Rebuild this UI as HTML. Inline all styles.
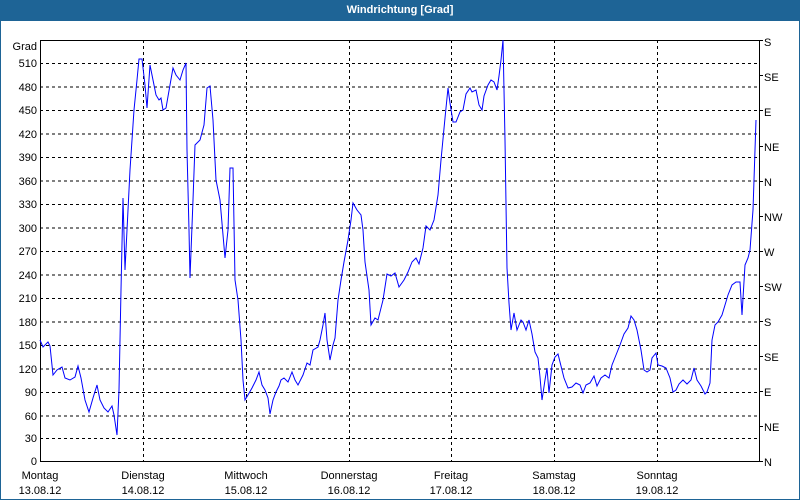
<!DOCTYPE html>
<html><head><meta charset="utf-8"><style>
html,body{margin:0;padding:0;background:#fff}
body{width:800px;height:500px;position:relative;overflow:hidden;font-family:"Liberation Sans",sans-serif}
.frame{position:absolute;left:0;top:0;width:798px;height:498px;border:1px solid #1e6496}
.title{position:absolute;left:0;top:0;width:800px;height:21px;background:#1e6496;color:#fff;font-weight:bold;font-size:11px;line-height:21px;text-align:center}
svg{position:absolute;left:0;top:0}
svg text{font-family:"Liberation Sans",sans-serif;font-size:11px;fill:#000}
</style></head><body>
<div class="frame"></div>
<div class="title">Windrichtung [Grad]</div>
<svg width="800" height="500" viewBox="0 0 800 500">
<g stroke="#000" stroke-width="1" stroke-dasharray="3,3" fill="none" shape-rendering="crispEdges">
<path d="M40 63.5H760M40 87H760M40 110.5H760M40 134H760M40 157.5H760M40 181H760M40 204.5H760M40 228H760M40 251.5H760M40 275H760M40 298.5H760M40 322H760M40 345.5H760M40 369H760M40 392.5H760M40 416H760M40 438.5H760"/>
<path d="M143.5 40V461M246.5 40V461M349.5 40V461M451.5 40V461M554.5 40V461M657.5 40V461"/>
</g>
<g stroke="#000" stroke-width="1" fill="none" shape-rendering="crispEdges">
<rect x="40.5" y="40.5" width="719" height="421"/>
<path d="M760 40.5h3M760 75.5h3M760 110.5h3M760 146.5h3M760 181.5h3M760 216.5h3M760 251.5h3M760 286.5h3M760 321.5h3M760 356.5h3M760 391.5h3M760 426.5h3M760 461.5h3"/>
</g>
<g text-anchor="end">
<text x="37" y="50">Grad</text>
<text x="37" y="67">510</text><text x="37" y="91">480</text><text x="37" y="114">450</text><text x="37" y="138">420</text><text x="37" y="161">390</text><text x="37" y="185">360</text><text x="37" y="208">330</text><text x="37" y="232">300</text><text x="37" y="255">270</text><text x="37" y="279">240</text><text x="37" y="302">210</text><text x="37" y="326">180</text><text x="37" y="349">150</text><text x="37" y="373">120</text><text x="37" y="396">90</text><text x="37" y="420">60</text><text x="37" y="442">30</text><text x="37" y="465">0</text>
</g>
<g>
<text x="764" y="46">S</text><text x="764" y="81">SE</text><text x="764" y="116">E</text><text x="764" y="151">NE</text><text x="764" y="186">N</text><text x="764" y="221">NW</text><text x="764" y="256">W</text><text x="764" y="291">SW</text><text x="764" y="326">S</text><text x="764" y="361">SE</text><text x="764" y="396">E</text><text x="764" y="431">NE</text><text x="764" y="466">N</text>
</g>
<g text-anchor="middle">
<text x="40" y="479">Montag</text><text x="40" y="494">13.08.12</text>
<text x="143" y="479">Dienstag</text><text x="143" y="494">14.08.12</text>
<text x="246" y="479">Mittwoch</text><text x="246" y="494">15.08.12</text>
<text x="349" y="479">Donnerstag</text><text x="349" y="494">16.08.12</text>
<text x="451" y="479">Freitag</text><text x="451" y="494">17.08.12</text>
<text x="554" y="479">Samstag</text><text x="554" y="494">18.08.12</text>
<text x="657" y="479">Sonntag</text><text x="657" y="494">19.08.12</text>
</g>
<polyline fill="none" stroke="#0000ff" stroke-width="1" points="40,340 43,347 48,342 50,346 53,375 57,370 62,367 65,378 70,380 75,377 78,366 81,378 85,400 89,412 93,398 97,385 100,400 104,408 108,412 112,406 114,415 117,435 119,390 121,290 123,198 125,270 127,230 130,170 134,110 137,80 139,59 142,59 145,85 147,108 150,65 153,80 156,95 159,100 161,98 163,110 166,108 170,85 173,68 176,75 180,80 183,70 186,63 187,150 189,230 190,278 193,200 195,145 200,140 204,125 207,88 210,86 213,120 216,180 220,200 225,258 228,230 230,168 233,168 235,280 238,300 241,340 243,380 245,400 248,395 252,388 256,380 259,372 262,385 265,390 268,398 270,414 273,400 276,392 279,386 281,380 284,378 288,382 292,372 295,380 298,385 303,375 307,363 310,365 313,350 318,347 320,340 323,325 325,313 327,340 330,360 333,345 335,338 338,300 341,280 344,262 348,240 351,220 353,203 357,210 361,215 363,230 365,262 369,290 371,325 375,318 378,320 383,300 387,274 391,276 395,273 399,287 404,280 408,272 412,262 416,258 419,264 423,248 426,226 430,230 434,220 438,195 441,160 445,118 448,88 450,103 453,122 456,122 460,112 463,110 466,94 470,88 472,92 476,90 479,105 482,110 484,96 488,85 491,80 494,82 497,90 499,76 501,60 503,40 505,140 507,268 509,303 511,330 514,313 517,330 519,325 521,320 523,322 526,330 529,320 532,334 535,352 538,358 540,377 542,400 545,380 547,368 549,393 552,365 555,357 558,354 561,366 564,378 568,388 572,387 576,383 580,385 583,393 586,385 590,383 594,376 597,386 601,378 605,375 609,378 612,365 616,355 620,345 624,334 628,328 631,316 634,320 637,330 641,350 644,370 647,372 650,370 652,358 656,353 658,365 662,366 666,368 670,378 673,392 676,390 679,384 683,380 687,384 691,380 694,368 697,380 701,386 705,394 707,392 710,383 712,340 715,325 718,322 722,315 725,305 728,295 732,285 736,282 740,282 742,315 745,265 748,258 750,250 753,210 755,150 756,120"/>
</svg>
</body></html>
